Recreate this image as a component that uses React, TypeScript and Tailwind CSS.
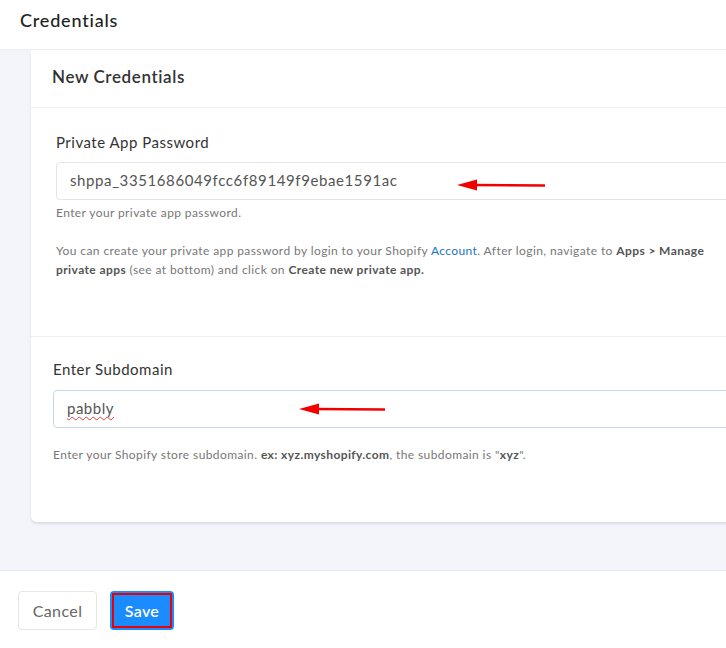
import React from 'react';

const font = { fontFamily: 'Lato, "Open Sans", sans-serif' };

function RedArrow({ x, y, len }: { x: number; y: number; len: number }) {
  return (
    <svg
      className="pointer-events-none absolute"
      style={{ left: x, top: y - 8 }}
      width={len}
      height={16}
      viewBox={`0 0 ${len} 16`}
    >
      <line x1={16} y1={8} x2={len - 1} y2={8.5} stroke="#f20000" strokeWidth={2.5} />
      <polygon points="0,8 20,2.5 20,13.5" fill="#f20000" />
    </svg>
  );
}

export default function App() {
  return (
    <div className="flex h-[648px] w-[726px] flex-col overflow-hidden bg-white" style={font}>
      <header className="h-[50px] shrink-0 border-b border-[#eef0f6] px-5 pt-[7px]">
        <h1 className="text-[18px] font-medium tracking-[0.8px] text-[#222]">Credentials</h1>
      </header>

      <main className="relative flex-1 bg-[#f4f5fa] pb-[48px] pl-[31px]">
        <div className="-mr-4 h-full rounded-bl-md bg-white shadow-[0_2px_3px_rgba(0,0,0,0.1)]">
          <div className="flex h-[58px] items-center border-b border-[#eef0f6] px-[21px] pb-[4px]">
            <h2 className="text-[17px] font-semibold tracking-[0.6px] text-[#333]">New Credentials</h2>
          </div>

          <section className="h-[229px] border-b border-[#eef0f6] pl-[25px] pt-[23px]">
            <label className="block text-[15px] tracking-[0.5px] text-[#333]">Private App Password</label>
            <div className="mt-[8px] flex h-[38px] items-center rounded-l border border-[#e3e5ea] px-[13px] text-[15px] tracking-[0.6px] text-[#555]">
              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
            </div>
            <p className="mt-[4px] text-[12px] tracking-[0.4px] text-[#777]">Enter your private app password.</p>
            <p className="mt-[19px] pr-2 text-[12px] leading-[19px] tracking-[0.4px] text-[#777]">
              You can create your private app password by login to your Shopify{' '}
              <span className="text-[#1a73c8]">Account</span>. After login, navigate to{' '}
              <b className="font-bold text-[#555]">Apps &gt; Manage</b>
              <br />
              <b className="font-bold text-[#555]">private apps</b> (see at bottom) and click on{' '}
              <b className="font-bold text-[#555]">Create new private app.</b>
            </p>
          </section>

          <section className="pl-[22px] pt-[21px]">
            <label className="block text-[15px] tracking-[0.5px] text-[#333]">Enter Subdomain</label>
            <div className="mt-[9px] flex h-[38px] items-center rounded-l border border-[#c6d6ee] px-[13px] text-[15px] tracking-[0.5px] text-[#555]">
              <span className="underline decoration-[#e04040] decoration-wavy decoration-1 underline-offset-2">pabbly</span>
            </div>
            <p className="mt-[18px] text-[12px] tracking-[0.4px] text-[#777]">
              Enter your Shopify store subdomain. <b className="font-bold text-[#555]">ex: xyz.myshopify.com</b>, the subdomain is "
              <b className="font-bold text-[#555]">xyz</b>".
            </p>
          </section>
        </div>
      </main>

      <footer className="flex h-[78px] shrink-0 items-start gap-[13px] border-t border-[#e6e8f5] px-[18px] pt-[20px]">
        <button className="h-[39px] w-[79px] rounded border border-[#e6e6e6] bg-white text-[16px] tracking-[0.4px] text-[#666]">
          Cancel
        </button>
        <button className="flex h-[39px] w-[64px] items-center justify-center rounded bg-[#1a8cff] p-[2px]">
          <span className="flex h-full w-full items-center justify-center border-2 border-[#ee0000] text-[16px] font-semibold tracking-[0.3px] text-white">
            Save
          </span>
        </button>
      </footer>

      <RedArrow x={457} y={185} len={89} />
      <RedArrow x={299} y={409} len={87} />
    </div>
  );
}
